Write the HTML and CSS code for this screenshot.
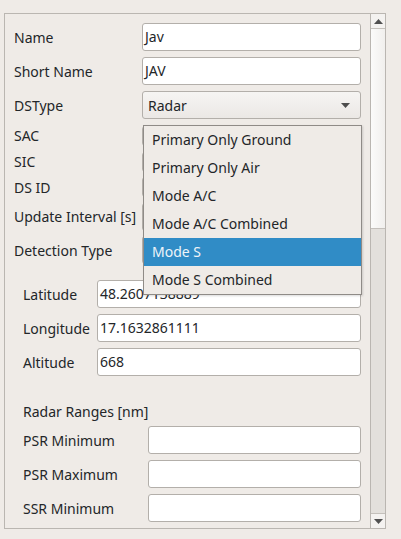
FILE: index.html
```html
<!DOCTYPE html>
<html>
<head>
<meta charset="utf-8">
<link rel="stylesheet" href="styles.css">
</head>
<body>
<div class="frame">
  <div class="content">
    <div class="row r28"><span class="label">Name</span><div class="input wide">Jav</div></div>
    <div class="row r28"><span class="label">Short Name</span><div class="input wide">JAV</div></div>
    <div class="row r28"><span class="label">DSType</span>
      <div class="combo wide"><span>Radar</span><svg class="arrow" width="9" height="5" viewBox="0 0 9 5"><path d="M0 0H9L4.5 5Z" fill="#4d4d4d"/></svg></div>
    </div>
    <div class="row sac"><span class="label">SAC</span><div class="input wide small"></div></div>
    <div class="row sic"><span class="label">SIC</span><div class="input wide small"></div></div>
    <div class="row dsid"><span class="label">DS ID</span><div class="input wide small"></div></div>
    <div class="row r27"><span class="label">Update Interval [s]</span><div class="input wide"></div></div>
    <div class="row r28"><span class="label">Detection Type</span><div class="combo wide"></div></div>

    <div class="group pos">
      <div class="row r28"><span class="label lpos">Latitude</span><div class="input grow">48.2607138889</div></div>
      <div class="row r28"><span class="label lpos">Longitude</span><div class="input grow">17.1632861111</div></div>
      <div class="row r28"><span class="label lpos">Altitude</span><div class="input grow">668</div></div>
    </div>

    <div class="group ranges">
      <div class="title">Radar Ranges [nm]</div>
      <div class="row r28"><span class="label lrange">PSR Minimum</span><div class="input grow"></div></div>
      <div class="row r28"><span class="label lrange">PSR Maximum</span><div class="input grow"></div></div>
      <div class="row r28"><span class="label lrange">SSR Minimum</span><div class="input grow"></div></div>
      <div class="row r28"><span class="label lrange"></span><div class="input grow"></div></div>
    </div>
  </div>
  <div class="scrollbar">
    <div class="sbtn"><svg width="9" height="5" viewBox="0 0 9 5"><path d="M4.5 0L9 5H0Z" fill="#505050"/></svg></div>
    <div class="thumb"></div>
    <div class="track"></div>
    <div class="sbtn down"><svg width="9" height="5" viewBox="0 0 9 5"><path d="M0 0H9L4.5 5Z" fill="#505050"/></svg></div>
  </div>
</div>

<div class="popup">
  <div class="item">Primary Only Ground</div>
  <div class="item">Primary Only Air</div>
  <div class="item">Mode A/C</div>
  <div class="item">Mode A/C Combined</div>
  <div class="item sel">Mode S</div>
  <div class="item">Mode S Combined</div>
</div>
</body>
</html>
```
FILE: styles.css
```css
html, body {
  margin: 0;
  padding: 0;
  background: #efebe7;
  font-family: "Noto Sans", "Open Sans", sans-serif;
  font-size: 14px;
  color: #232629;
  width: 401px;
  height: 539px;
  overflow: hidden;
}
.frame {
  margin: 13px 0 0 4px;
  width: 380px;
  height: 514px;
  border: 1px solid #bab6b1;
  display: flex;
  overflow: hidden;
}
.content {
  flex: 1;
  padding: 9px 9px 0 9px;
  display: flex;
  flex-direction: column;
  gap: 6px;
  overflow: hidden;
}
.row {
  display: flex;
  align-items: center;
  flex-shrink: 0;
}
.r28 { height: 28px; }
.r27 { height: 27px; }
.sac { height: 21px; }
.sic { height: 19px; }
.dsid { height: 20px; }
.label {
  white-space: nowrap;
}
.wide {
  margin-left: auto;
  width: 219px;
}
.input {
  box-sizing: border-box;
  height: 28px;
  background: #fff;
  border: 1px solid #b3afaa;
  border-radius: 3px;
  padding-left: 2px;
  display: flex;
  align-items: center;
  line-height: 1;
}
.input.small { height: 20px; }
.combo {
  box-sizing: border-box;
  height: 28px;
  border: 1px solid #b3afaa;
  border-radius: 3px;
  background: linear-gradient(#f6f5f3, #ebe8e5);
  display: flex;
  align-items: center;
  padding: 0 10px 0 5px;
}
.combo .arrow { margin-left: auto; }
.grow { flex: 1; }
.group {
  display: flex;
  flex-direction: column;
  gap: 6px;
  padding: 0 0 0 9px;
  flex-shrink: 0;
}
.pos { margin-top: 10px; }
.lpos { width: 74px; }
.ranges { margin-top: 22px; }
.ranges .title { height: 16px; line-height: 16px; }
.lrange { width: 125px; }
.scrollbar {
  width: 14px;
  border-left: 1px solid #bab6b1;
  display: flex;
  flex-direction: column;
  background: #e3e0dc;
}
.sbtn {
  height: 14px;
  border-bottom: 1px solid #c4c0bb;
  background: #f4f2f0;
  display: flex;
  align-items: center;
  justify-content: center;
  flex-shrink: 0;
}
.sbtn.down {
  border-bottom: none;
  border-top: 1px solid #c4c0bb;
}
.thumb {
  height: 199px;
  flex-shrink: 0;
  background: linear-gradient(90deg, #fbfbfa, #f1efed);
  border-bottom: 1px solid #c4c0bb;
}
.track { flex: 1; }
.popup {
  position: absolute;
  left: 143px;
  top: 125px;
  width: 217px;
  border: 1px solid #8f8b87;
  background: #efebe7;
  box-shadow: 1px 1px 2px rgba(0,0,0,0.15);
}
.item {
  height: 28px;
  line-height: 28px;
  padding-left: 8px;
  white-space: nowrap;
}
.item.sel {
  background: #308cc6;
  color: #eef4f9;
}
```
